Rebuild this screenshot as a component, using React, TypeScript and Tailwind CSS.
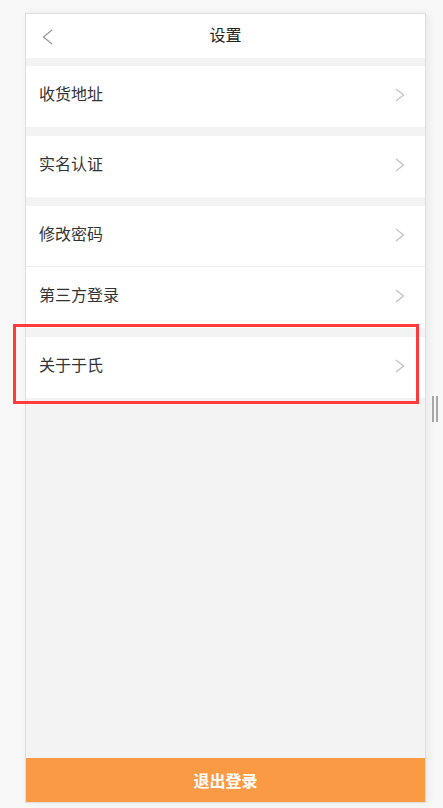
const font = { fontFamily: '"Noto Sans CJK SC", "Noto Sans", sans-serif' }

function Chevron() {
  return (
    <svg width="10" height="14" viewBox="0 0 10 14" fill="none">
      <path d="M1 1 L8.5 7 L1 13" stroke="#c4c4c4" strokeWidth="1.3" />
    </svg>
  )
}

function Row({ label, divider }: { label: string; divider?: boolean }) {
  return (
    <div className={`flex h-[61px] items-center justify-between bg-white pb-[3px] pl-[13px] pr-[20px] ${divider ? 'border-b border-[#eeeeee]' : ''}`}>
      <span className="mb-[4px] text-[16px] leading-none text-[#333333]">{label}</span>
      <Chevron />
    </div>
  )
}

export default function App() {
  return (
    <div className="relative h-[808px] w-[443px] overflow-hidden bg-[#f8f8f8]" style={font}>
      <div className="ml-[25px] mt-[13px] flex h-[790px] w-[401px] flex-col border border-[#dedede] bg-[#f3f3f3] shadow-[3px_0_8px_rgba(0,0,0,0.06)]">
        <div className="relative flex h-[44px] items-center justify-center bg-white pb-[5px]">
          <svg className="absolute left-[16px] top-[15px]" width="11" height="16" viewBox="0 0 11 16" fill="none">
            <path d="M10 1 L1.5 8 L10 15" stroke="#9a9a9a" strokeWidth="1.3" />
          </svg>
          <span className="text-[16px] leading-none text-[#222222]">设置</span>
        </div>
        <div className="h-[8px]" />
        <Row label="收货地址" />
        <div className="h-[9px]" />
        <Row label="实名认证" />
        <div className="h-[9px]" />
        <Row label="修改密码" divider />
        <Row label="第三方登录" />
        <div className="h-[9px]" />
        <Row label="关于于氏" />
        <div className="flex-1" />
        <div className="flex h-[44px] items-center justify-center bg-[#fb9a45]">
          <span className="text-[16px] font-bold text-white">退出登录</span>
        </div>
      </div>

      <div className="absolute left-[13px] top-[324px] h-[80px] w-[406px] border-[3px] border-[#ff3b3b]" />

      <div className="absolute left-[432px] top-[396px] flex gap-[2px]">
        <div className="h-[26px] w-[2px] bg-[#a8a8a8]" />
        <div className="h-[26px] w-[2px] bg-[#a8a8a8]" />
      </div>
    </div>
  )
}
